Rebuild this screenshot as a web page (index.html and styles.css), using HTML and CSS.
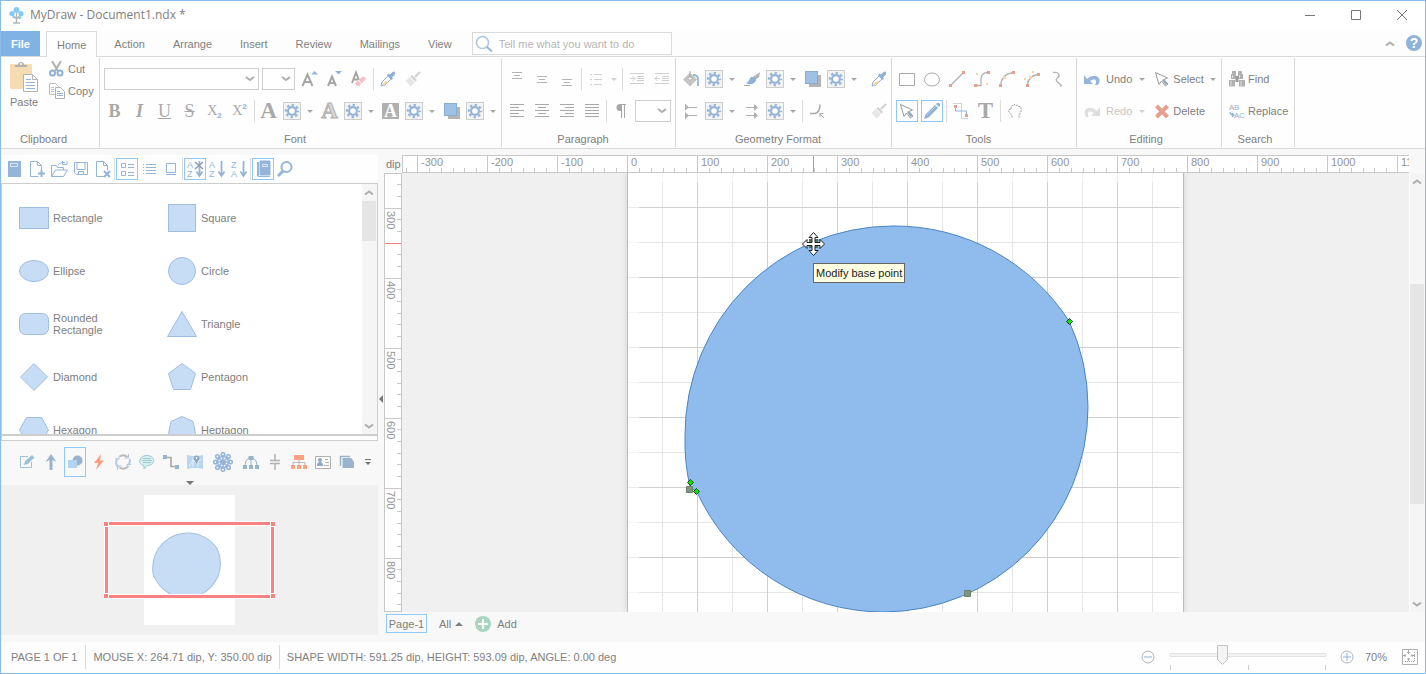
FILE: index.html
```html
<!DOCTYPE html>
<html lang="en">
  <head>
    <meta charset="UTF-8" />
    <title>MyDraw - Document1.ndx *</title>
    <link rel="stylesheet" href="styles.css">
  </head>
  <body>
    <!-- icons that are used more than once -->
    <svg class="sprite" width="0" height="0">
      <symbol id="gear" viewBox="0 0 18 18">
        <rect x=".5" y=".5" width="17" height="17" fill="#f3f3f3" stroke="#cdcdcd" />
        <circle cx="9" cy="9" r="6" fill="none" stroke="#94b5d9" stroke-width="2.4" stroke-dasharray="2.3 2.41" stroke-dashoffset="1.1" />
        <circle cx="9" cy="9" r="3.9" fill="#fff" stroke="#94b5d9" stroke-width="2.2" />
      </symbol>
      <symbol id="dropper" viewBox="0 0 16 16">
        <path d="M1 15l1-4 6-6 3 3-6 6z" fill="#fff" stroke="#8fb1d6" />
        <path d="M3 12l3-2 2 1-3 3-3 .5z" fill="#f3d6a6" />
        <path d="M7 4l1.500-1.500 1.500 1L12.500 1q2-1 2.500.5t-.5 2.500L12 6.500l1 1L11.500 9z" fill="#8fb1d6" />
      </symbol>
      <symbol id="brush" viewBox="0 0 16 16">
        <path d="M15 1l-5 5" stroke="#d5d5d5" stroke-width="2.400" />
        <path d="M7 4l5 5-1.500 1.500-5-5z" fill="#cfcfcf" />
        <path d="M5 6l5 5-4 4.500L.5 10z" fill="#e6e6e6" />
      </symbol>
      <symbol id="squares" viewBox="0 0 16 16">
        <rect x="4" y="4" width="12" height="12" fill="#b4b4b4" />
        <rect x=".5" y=".5" width="12" height="12" fill="#9fc1e4" stroke="#86add6" />
      </symbol>
      <symbol id="pointer" viewBox="0 0 16 16">
        <path d="M1.500 1.500l3.500 12 2.500-3.500 4 5 2.500-2-4-4.500 3.500-1.500z" fill="#fff" stroke="#9a9a9a" />
        <path d="M8 9l3.500 5 2-1.500L9.500 8z" fill="#8fa9c6" />
      </symbol>
      <symbol id="file" viewBox="0 0 18 18">
        <path d="M10.500 16.500h-8v-15h7l4 4v5M9.500 1.500v4h4" fill="none" stroke="#94b5d9" />
      </symbol>
      <symbol id="az" viewBox="0 0 18 18">
        <path d="M13.500 1v15M10.500 11.500l3 4.500 3-4.500" fill="none" stroke="#94b5d9" stroke-width="1.800" />
      </symbol>
      <symbol id="down" viewBox="0 0 10 6"><path d="M1 1.500l4 3 4-3" fill="none" stroke="#aeaeae" stroke-width="2" /></symbol>
      <symbol id="up" viewBox="0 0 10 6"><path d="M1 4.500l4-3 4 3" fill="none" stroke="#aeaeae" stroke-width="2" /></symbol>
    </svg>

    <header class="titlebar">
      <svg class="logo" width="16" height="17" viewBox="0 0 16 17">
        <path d="M7.500 6v10M4 16h7M7.500 12L4 8M7.500 12l4-4" stroke="#b5b5b5" stroke-width="1.300" fill="none" />
        <g fill="#85cbf3"><circle cx="7.500" cy="3" r="3" /><circle cx="3" cy="6.500" r="2.600" /><circle cx="12" cy="6.500" r="2.600" /><circle cx="4.500" cy="10" r="1.200" /><circle cx="11" cy="10.500" r="1.500" /></g>
      </svg>
      <h1>MyDraw - Document1.ndx *</h1>
      <button class="window-btn" aria-label="Minimize"><svg width="12" height="12"><path d="M1 6.500h10" stroke="#777" /></svg></button>
      <button class="window-btn" aria-label="Maximize"><svg width="12" height="12"><path d="M1.500 1.500h9v9h-9z" fill="none" stroke="#777" /></svg></button>
      <button class="window-btn" aria-label="Close"><svg width="12" height="12"><path d="M1 1l10 10M11 1L1 11" stroke="#777" /></svg></button>
    </header>

    <nav class="tabs">
      <button class="file-tab">File</button>
      <button class="tab active">Home</button>
      <button class="tab">Action</button>
      <button class="tab">Arrange</button>
      <button class="tab">Insert</button>
      <button class="tab">Review</button>
      <button class="tab">Mailings</button>
      <button class="tab">View</button>
      <label class="tell-me">
        <svg width="18" height="18" viewBox="0 0 18 18"><circle cx="7.500" cy="7.500" r="6" fill="none" stroke="#a9c6e6" stroke-width="1.600" /><path d="M12 12l5 4.500" stroke="#94b5d9" stroke-width="2" /></svg>
        <input type="text" aria-label="Tell me what you want to do" placeholder="Tell me what you want to do">
      </label>
      <button class="collapse" aria-label="Collapse ribbon"><svg width="10" height="6"><use href="#up" /></svg></button>
      <button class="help" aria-label="Help">?</button>
    </nav>

    <section class="ribbon">
      <div class="group clipboard">
        <div class="group-body">
          <button class="paste">
            <svg width="28" height="31" viewBox="0 0 28 31">
              <rect x="0" y="3" width="22" height="25" rx="1" fill="#f6dcb3" />
              <path d="M5 6V4h3q0-3 3-3t3 3h3v2z" fill="#b3b3b3" /><circle cx="11" cy="3" r="1" fill="#fff" />
              <path d="M13.500 13.500h9l5 5v12h-14z" fill="#fff" stroke="#b3b3b3" /><path d="M22.500 13.500v5h5" fill="none" stroke="#b3b3b3" />
              <path d="M16 18.500h5M16 21.500h9M16 24.500h9M16 27.500h9" stroke="#94b5d9" />
            </svg>
            Paste
          </button>
          <div class="stack">
            <button class="tool">
              <svg width="16" height="16" viewBox="0 0 16 16"><path d="M3 0l6 10M12 0L6 10" stroke="#b0b0b0" stroke-width="2" /><g fill="none" stroke="#8fb1d6" stroke-width="2"><circle cx="3.500" cy="12" r="2.500" /><circle cx="11" cy="12" r="2.500" /></g></svg>
              Cut
            </button>
            <button class="tool">
              <svg width="16" height="16" viewBox="0 0 16 16"><path d="M.5.500h6l3 3v8h-9z" fill="#fff" stroke="#bdbdbd" /><path d="M2 4.500h3M2 6.500h3M2 8.500h3" stroke="#a9c6e6" /><path d="M6.500 4.500h5l4 4v7h-9z" fill="#fff" stroke="#b0b0b0" /><path d="M8 8.500h3M8 10.500h6M8 12.500h6" stroke="#94b5d9" /></svg>
              Copy
            </button>
          </div>
        </div>
        <h2>Clipboard</h2>
      </div>

      <div class="group font">
        <div class="row">
          <select class="combo combo-font" aria-label="Font name"></select>
          <select class="combo combo-size" aria-label="Font size"></select>
          <button class="btn" aria-label="Grow font"><svg width="18" height="18"><path d="M2.500 16L7.500 4.500 12.500 16M4.500 12h6" fill="none" stroke="#a6a6a6" stroke-width="2" /><path d="M11 4.500l3.500-3.500L18 4.500z" fill="#94b5d9" /></svg></button>
          <button class="btn" aria-label="Shrink font"><svg width="18" height="18"><path d="M3 16L7 6.500 11 16M4.500 13h5" fill="none" stroke="#a6a6a6" stroke-width="2" /><path d="M10 1l3.500 3.500L17 1z" fill="#94b5d9" /></svg></button>
          <button class="btn" aria-label="Clear formatting"><svg width="18" height="18"><path d="M2 13L6 2.500 10 13M3.500 9.500h5" fill="none" stroke="#a6a6a6" stroke-width="2" /><path d="M5 13l7-6q3-1 4 2l-7 7H7z" fill="#f4c0c8" /><path d="M8 10l4 4" stroke="#fff" /></svg></button>
          <i class="sep"></i>
          <button class="btn" aria-label="Pick format"><svg width="16" height="16"><use href="#dropper" /></svg></button>
          <button class="btn" aria-label="Apply format"><svg width="16" height="16"><use href="#brush" /></svg></button>
        </div>
        <div class="row">
          <button class="btn serif"><b>B</b></button>
          <button class="btn serif"><i>I</i></button>
          <button class="btn serif"><u>U</u></button>
          <button class="btn serif"><s>S</s></button>
          <button class="btn script">X<sub>2</sub></button>
          <button class="btn script">X<sup>2</sup></button>
          <i class="sep"></i>
          <button class="btn serif big"><b>A</b></button>
          <button class="gear" aria-label="Fill settings"><svg width="18" height="18"><use href="#gear" /></svg></button>
          <button class="caret" aria-label="More"></button>
          <button class="btn serif big outline"><b>A</b></button>
          <button class="gear" aria-label="Stroke settings"><svg width="18" height="18"><use href="#gear" /></svg></button>
          <button class="caret" aria-label="More"></button>
          <button class="btn serif knockout"><b>A</b></button>
          <button class="gear" aria-label="Background settings"><svg width="18" height="18"><use href="#gear" /></svg></button>
          <button class="caret" aria-label="More"></button>
          <button class="btn" aria-label="Shadow"><svg width="16" height="16"><use href="#squares" /></svg></button>
          <button class="gear" aria-label="Shadow settings"><svg width="18" height="18"><use href="#gear" /></svg></button>
          <button class="caret" aria-label="More"></button>
        </div>
        <h2>Font</h2>
      </div>

      <div class="group paragraph">
        <div class="row">
          <button class="btn" aria-label="Align top"><svg width="16" height="16"><path d="M3 1.500h10M5 4.500h6M3 7.500h10" stroke="#b3b3b3" /></svg></button>
          <button class="btn" aria-label="Align middle"><svg width="16" height="16"><path d="M3 5.500h10M5 8.500h6M3 11.500h10" stroke="#b3b3b3" /></svg></button>
          <button class="btn" aria-label="Align bottom"><svg width="16" height="16"><path d="M3 8.500h10M5 11.500h6M3 14.500h10" stroke="#b3b3b3" /></svg></button>
          <i class="sep"></i>
          <button class="btn" aria-label="Bullets"><svg width="16" height="16"><path d="M2 3.500h2M6 3.500h8M2 8.500h2M6 8.500h8M2 13.500h2M6 13.500h8" stroke="#d2d2d2" /></svg></button>
          <button class="caret light" aria-label="More bullets"></button>
          <i class="sep"></i>
          <button class="btn" aria-label="Increase indent"><svg width="16" height="16"><path d="M1 2.500h14M8 5.500h7M8 7.500h7M8 9.500h7M1 12.500h14M1 7.500h5M3.500 5l2.500 2.500L3.500 10" fill="none" stroke="#cfcfcf" /></svg></button>
          <button class="btn" aria-label="Decrease indent"><svg width="16" height="16"><path d="M1 2.500h14M8 5.500h7M8 7.500h7M8 9.500h7M1 12.500h14M1 7.500h5M3.500 5L1 7.500 3.500 10" fill="none" stroke="#cfcfcf" /></svg></button>
        </div>
        <div class="row">
          <button class="btn" aria-label="Align left"><svg width="16" height="16"><path d="M1 1.500h14M1 4.500h9M1 7.500h14M1 10.500h9M1 13.500h14" stroke="#a8a8a8" /></svg></button>
          <button class="btn" aria-label="Align center"><svg width="16" height="16"><path d="M1 1.500h14M4 4.500h8M1 7.500h14M4 10.500h8M1 13.500h14" stroke="#a8a8a8" /></svg></button>
          <button class="btn" aria-label="Align right"><svg width="16" height="16"><path d="M1 1.500h14M6 4.500h9M1 7.500h14M6 10.500h9M1 13.500h14" stroke="#a8a8a8" /></svg></button>
          <button class="btn" aria-label="Justify"><svg width="16" height="16"><path d="M1 1.500h14M1 4.500h14M1 7.500h14M1 10.500h14M1 13.500h14" stroke="#a8a8a8" /></svg></button>
          <i class="sep"></i>
          <button class="btn" aria-label="Paragraph direction"><svg width="16" height="16"><path d="M8 1.500h5M8.500 1v14M11.500 1v14" stroke="#a8a8a8" /><path d="M9 1H7a3.500 3.500 0 0 0 0 7h2z" fill="#a8a8a8" /></svg></button>
          <select class="combo combo-line" aria-label="Line spacing"></select>
        </div>
        <h2>Paragraph</h2>
      </div>

      <div class="group geometry">
        <div class="row">
          <button class="btn" aria-label="Fill"><svg width="18" height="18"><path d="M8 2.500L15 9.500 8 16.500 1 9.500z" fill="#c4c4c4" /><path d="M8 1v7M6 8.500l2-3 2 3-2 2z" fill="#fff" stroke="#aaa" /><path d="M11 5q5 0 5 4v7" fill="none" stroke="#94b5d9" stroke-width="1.800" /></svg></button>
          <button class="gear" aria-label="Fill settings"><svg width="18" height="18"><use href="#gear" /></svg></button>
          <button class="caret" aria-label="More"></button>
          <button class="btn" aria-label="Stroke"><svg width="18" height="18"><path d="M17 2l-1 5-4 3-2-3z" fill="#b4b4b4" /><path d="M3 13q3-1 4-5 3-3 6 1 0 4-4 5-3 1-6-1z" fill="#8fb1d6" /><path d="M1 15.500h6" stroke="#aaa" /></svg></button>
          <button class="gear" aria-label="Stroke settings"><svg width="18" height="18"><use href="#gear" /></svg></button>
          <button class="caret" aria-label="More"></button>
          <button class="btn" aria-label="Shadow"><svg width="16" height="16"><use href="#squares" /></svg></button>
          <button class="gear" aria-label="Shadow settings"><svg width="18" height="18"><use href="#gear" /></svg></button>
          <button class="caret" aria-label="More"></button>
          <button class="btn last" aria-label="Pick format"><svg width="16" height="16"><use href="#dropper" /></svg></button>
        </div>
        <div class="row">
          <button class="btn" aria-label="Begin arrowhead"><svg width="16" height="18"><path d="M2 5.500h12M2 13.500h12" stroke="#b0b0b0" /><path d="M2 1.500l4 4-4 3zM2 10l4 3.500-4 4z" fill="#b0b0b0" /></svg></button>
          <button class="gear" aria-label="Begin arrowhead settings"><svg width="18" height="18"><use href="#gear" /></svg></button>
          <button class="caret" aria-label="More"></button>
          <button class="btn" aria-label="End arrowhead"><svg width="16" height="18"><path d="M2 5.500h10M2 13.500h10" stroke="#b0b0b0" /><path d="M10 2l4 3.500L10 9zM10 10l4 3.500-4 3.500z" fill="#b0b0b0" /></svg></button>
          <button class="gear" aria-label="End arrowhead settings"><svg width="18" height="18"><use href="#gear" /></svg></button>
          <button class="caret" aria-label="More"></button>
          <i class="sep"></i>
          <button class="btn" aria-label="Corner rounding"><svg width="16" height="16"><path d="M1 10.500h5q5-1 5-9" fill="none" stroke="#aaa" stroke-width="1.600" /><path d="M15 15l-4-4M11 14v-3.500h3.500" fill="none" stroke="#aaa" /></svg></button>
          <button class="btn last" aria-label="Apply format"><svg width="16" height="16"><use href="#brush" /></svg></button>
        </div>
        <h2>Geometry Format</h2>
      </div>

      <div class="group tools">
        <div class="row">
          <button class="btn" aria-label="Rectangle tool"><svg width="16" height="16"><path d="M.5 2.500h15v12H.5z" fill="none" stroke="#aaa" /></svg></button>
          <button class="btn" aria-label="Ellipse tool"><svg width="16" height="16"><ellipse cx="8" cy="8.500" rx="7.500" ry="6.500" fill="none" stroke="#aaa" /></svg></button>
          <button class="btn" aria-label="Line tool"><svg width="16" height="16"><path d="M2 14L14 2" stroke="#b0b0b0" stroke-width="1.300" /><path d="M0 13h3v3H0zM13 0h3v3h-3z" fill="#e6a090" /></svg></button>
          <button class="btn" aria-label="Bezier tool"><svg width="16" height="16"><path d="M1 14.500h6V8q0-6.500 7-6.500" fill="none" stroke="#b0b0b0" stroke-width="1.300" /><path d="M0 13h3v3H0zM13 0h3v3h-3z" fill="#e6a090" /><path d="M2 2h2v2H2zM12 12h2v2h-2z" fill="#f3d6a6" /></svg></button>
          <button class="btn" aria-label="Arc tool"><svg width="16" height="16"><path d="M1.500 14Q3 3 14 1.500" fill="none" stroke="#b0b0b0" stroke-width="1.300" /><path d="M0 13h3v3H0zM13 0h3v3h-3z" fill="#e6a090" /><path d="M4 5h3v3H4z" fill="#f3d6a6" /></svg></button>
          <button class="btn" aria-label="Curve tool"><svg width="16" height="16"><path d="M3.500 14Q4 5 14 3.500" fill="none" stroke="#b0b0b0" stroke-width="1.300" /><path d="M2 13h3v3H2zM13 2h3v3h-3z" fill="#e6a090" /><path d="M5 5h3v3H5zM8 0h2v2H8zM0 7h2v2H0z" fill="#f3d6a6" /></svg></button>
          <button class="btn" aria-label="Freehand tool"><svg width="16" height="16"><path d="M4 1.500c6-1 8 3 4 6s8 7 3 7.500" fill="none" stroke="#b5b5b5" stroke-width="1.300" /></svg></button>
        </div>
        <div class="row">
          <button class="btn on" aria-label="Pointer tool"><svg width="16" height="16"><use href="#pointer" /></svg></button>
          <button class="btn on" aria-label="Edit points tool"><svg width="16" height="16"><path d="M0 16l1.500-4.500L11 2l3 3-9.500 9.500z" fill="#8fb1d6" /><path d="M12 1l1-1h2l1 1v2l-1 1z" fill="#8fb1d6" /><path d="M2.500 12.500l9-9" stroke="#b7cfe8" /></svg></button>
          <i class="sep"></i>
          <button class="btn" aria-label="Connector tool"><svg width="16" height="16"><path d="M.5.500h8v15h7" fill="none" stroke="#aaa" stroke-dasharray="1 1" /><path d="M2.500 4v4h11v4" fill="none" stroke="#8fb1d6" /><path d="M1 2h3v3H1zM12 11h3v3h-3z" fill="#e6a090" /></svg></button>
          <button class="btn serif big"><b>T</b></button>
          <i class="sep"></i>
          <button class="btn" aria-label="Pan tool"><svg width="16" height="16"><path d="M5 14.500v-2L2 9 1.500 7l1.500-1 1 .5V3.500L5.500 2.500l1 .5 1-1.500 1.500 1 1.500-.5 1 1.500L13 3.500l1 1.500v4l-2 3v2.500" fill="none" stroke="#999" stroke-dasharray="2 1" /></svg></button>
        </div>
        <h2>Tools</h2>
      </div>

      <div class="group editing">
        <div class="row">
          <button class="tool wide"><svg width="16" height="16"><path d="M0 4v9h9L6 10q5-3.500 6 0 .5 2-1 4h3q3-5 0-8-5-3.500-11 2z" fill="#94b5d9" /></svg>Undo</button>
          <button class="caret gap" aria-label="More undo"></button>
          <button class="tool"><svg width="16" height="16"><use href="#pointer" /></svg>Select</button>
          <button class="caret after" aria-label="More select"></button>
        </div>
        <div class="row">
          <button class="tool wide" disabled><svg width="16" height="16"><path d="M16 4v9H7l3-3q-5-3.500-6 0-.5 2 1 4H2q-3-5 0-8 5-3.500 11 2z" fill="#dedede" /></svg>Redo</button>
          <button class="caret gap light" aria-label="More redo"></button>
          <button class="tool"><svg width="16" height="16"><path d="M2.500 3l11 11M13.500 3l-11 11" stroke="#e6a090" stroke-width="4" /></svg>Delete</button>
        </div>
        <h2>Editing</h2>
      </div>

      <div class="group search">
        <div class="row">
          <button class="tool"><svg width="16" height="16"><path d="M3 0h4v3H3zM9 0h4v3H9zM2 3h5v5H2zM9 3h5v5H9zM0 9h6v6.500H0zM10 9h6v6.500h-6z" fill="#b0b0b0" /><path d="M6.500 5h3v6h-3z" fill="#9a9a9a" /><path d="M2 10v5M12 10v5M3.500 4v3M10.500 4v3" stroke="#dcdcdc" /></svg>Find</button>
        </div>
        <div class="row">
          <button class="tool"><svg width="16" height="18" class="ab small"><text x="0" y="8" fill="#aaa">A</text><text x="5" y="8">B</text><text x="5" y="16" fill="#aaa">A</text><text x="10" y="16">C</text><path d="M1 10q0 3 4 3M3 11l2 2-2 2" fill="none" stroke="#8fb1d6" stroke-width="1.300" /></svg>Replace</button>
        </div>
        <h2>Search</h2>
      </div>
    </section>

    <main>
      <aside>
        <div class="library-bar">
          <button aria-label="Library"><svg width="18" height="18"><path d="M2 1h13v16H2z" fill="#94b5d9" /><path d="M4.500 3.500h7v3h-7z" fill="#94b5d9" stroke="#dbe7f4" /></svg></button>
          <button aria-label="New library"><svg width="18" height="18"><use href="#file" /><path d="M13.500 10v7M10 13.500h7" stroke="#94b5d9" stroke-width="2" /></svg></button>
          <button aria-label="Open library"><svg width="18" height="18"><path d="M1.500 16V5.500h5l1 2h6V10M1.500 16.500l4-6.500h12l-4 6.500zM8 5q2-3 7-2.500M12.500 1v3.500H17V1" fill="none" stroke="#94b5d9" /></svg></button>
          <button aria-label="Save library"><svg width="18" height="18"><path d="M2.500 2.500h13v12h-11l-2-2zM5 2.500v7h8v-7M6.500 14.500v-3h5v3" fill="none" stroke="#94b5d9" /></svg></button>
          <button aria-label="Close library"><svg width="18" height="18"><use href="#file" /><path d="M10 11l6 6M16 11l-6 6" stroke="#94b5d9" stroke-width="2" /></svg></button>
          <i class="sep"></i>
          <button class="on" aria-label="Icons and names"><svg width="18" height="18"><path d="M3.500 3.500h4v4h-4zM3.500 11.500h4v4h-4zM10 4.500h6M10 7.500h6M10 12.500h6M10 15.500h6" fill="none" stroke="#94b5d9" /></svg></button>
          <button aria-label="Names"><svg width="18" height="18"><path d="M3 4.500h1M6 4.500h10M3 7.500h1M6 7.500h10M3 10.500h1M6 10.500h10M3 13.500h1M6 13.500h10" stroke="#94b5d9" /></svg></button>
          <button aria-label="Icons"><svg width="18" height="18"><path d="M4.500 3.500h9v9h-9zM4 14.500h10" fill="none" stroke="#94b5d9" /></svg></button>
          <i class="sep"></i>
          <button class="on" aria-label="Unsorted"><svg width="18" height="18" class="ab"><use href="#az" /><text x="1" y="8">A</text><text x="1" y="17">Z</text><path d="M9 2l8 7M17 2L9 9" stroke="#8b9bb0" stroke-width="1.500" /></svg></button>
          <button aria-label="Sort ascending"><svg width="18" height="18" class="ab"><use href="#az" /><text x="1" y="8">A</text><text x="1" y="17">Z</text></svg></button>
          <button aria-label="Sort descending"><svg width="18" height="18" class="ab"><use href="#az" /><text x="1" y="8">Z</text><text x="1" y="17">A</text></svg></button>
          <i class="sep"></i>
          <button class="on" aria-label="Show book"><svg width="18" height="18"><path d="M3.500 2v14h1V2M6 1h10v14H6zM4 16.500h12" fill="#94b5d9" stroke="#94b5d9" /><path d="M8.500 4.500h5v2h-5z" fill="none" stroke="#dbe7f4" /></svg></button>
          <button aria-label="Find shape"><svg width="18" height="18"><circle cx="10.500" cy="7" r="5" fill="none" stroke="#94b5d9" stroke-width="2" /><path d="M7 11l-5 5" stroke="#94b5d9" stroke-width="3" /></svg></button>
        </div>

        <div class="library">
          <ul class="shapes">
            <li><svg viewBox="0 0 30 30"><rect x=".5" y="4.500" width="29" height="21" /></svg>Rectangle</li>
            <li><svg viewBox="0 0 30 30"><rect x="1.500" y="1.500" width="27" height="27" /></svg>Square</li>
            <li><svg viewBox="0 0 30 30"><ellipse cx="15" cy="15" rx="14.500" ry="10.500" /></svg>Ellipse</li>
            <li><svg viewBox="0 0 30 30"><circle cx="15" cy="15" r="13.500" /></svg>Circle</li>
            <li><svg viewBox="0 0 30 30"><rect x=".5" y="4.500" width="29" height="21" rx="6" /></svg>Rounded<br>Rectangle</li>
            <li><svg viewBox="0 0 30 30"><path d="M15 2.500L29.500 27.500H.5z" /></svg>Triangle</li>
            <li><svg viewBox="0 0 30 30"><path d="M15 1.500L28.500 15 15 28.500 1.500 15z" /></svg>Diamond</li>
            <li><svg viewBox="0 0 30 30"><path d="M15 1.500l13.500 10-5 16h-17l-5-16z" /></svg>Pentagon</li>
            <li><svg viewBox="0 0 30 30"><path d="M.5 15l7-12.500h15l7 12.500-7 12.500h-15z" /></svg>Hexagon</li>
            <li><svg viewBox="0 0 30 30"><path d="M15 1.500l11 5 2.500 12L21 28.500H9L1.500 18.500 4 6.500z" /></svg>Heptagon</li>
          </ul>
          <div class="scrollbar">
            <button aria-label="Scroll up"><svg width="10" height="6"><use href="#up" /></svg></button>
            <div class="thumb"></div>
            <button aria-label="Scroll down"><svg width="10" height="6"><use href="#down" /></svg></button>
          </div>
        </div>
        <div class="library-split"></div>

        <div class="category-bar">
          <button aria-label="Annotations"><svg width="16" height="16"><path d="M9 2.500H1.500v11h11V8" fill="none" stroke="#9dc3d9" /><path d="M5 11l1-4 7-6 2.500 2.500L9 10z" fill="#9dc3d9" /></svg></button>
          <button aria-label="Arrows"><svg width="16" height="16"><path d="M8 0l5.500 8-4-2V16h-3V6l-4 2z" fill="#9ab3cd" /></svg></button>
          <button class="on" aria-label="Basic shapes"><svg width="16" height="16"><circle cx="10.500" cy="6.500" r="5" fill="#9ab3cd" /><path d="M1 6h9v8H1z" fill="#b3d3f3" /></svg></button>
          <button aria-label="Electrical"><svg width="16" height="16"><path d="M10 0L3 9h4l-2 7 8-9.500H9z" fill="#fd9f80" /></svg></button>
          <button aria-label="Cycles"><svg width="16" height="16" fill="none" stroke-width="2"><path d="M4.500 2.500a6.500 6.500 0 0 1 8 .5M13.500 12a6.500 6.500 0 0 1-9 1.500" stroke="#b9b9b9" /><path d="M14.500 5a6.500 6.500 0 0 1-1 6M3.500 13.500a6.500 6.500 0 0 1-1-9" stroke="#aecbe5" /><path d="M13.500 0v4h-4M16 10.500h-4v3M2.500 16v-4h4M0 5h4V2" stroke="#b4c6d8" stroke-width="1" /></svg></button>
          <button aria-label="Callouts"><svg width="16" height="16"><path d="M8 1.500c9 0 9 10 0 10L5 15v-3.500c-7-1-5-10 3-10z" fill="#d9f0f0" stroke="#9dc9d3" /><path d="M4 4.500h8M3 6.500h10M4 8.500h8" stroke="#9dc9d3" /></svg></button>
          <button aria-label="Connectors"><svg width="16" height="16"><path d="M2 3.500h6v9h6" fill="none" stroke="#a6a6a6" stroke-width="1.600" /><path d="M0 1h4v4H0zM12 11h4v4h-4z" fill="#9ab3cd" /></svg></button>
          <button aria-label="Maps"><svg width="16" height="16"><path d="M0 1l5 1 6 0 5-1v14l-5-1H5l-5 1z" fill="#b9d5ef" /><path d="M2 12l4-6 4 3 4-4M6 3v10M11 9v4" stroke="#e9f2fa" fill="none" /><path d="M9.500 10L6.500 4.500a3 3 0 0 1 6 0z" fill="#8ba7c4" /><circle cx="9.500" cy="4" r="1" fill="#fff" /></svg></button>
          <button class="large" aria-label="Fractals">
            <svg width="20" height="20" fill="none" stroke="#94b5d9" stroke-width="1.500">
              <path d="M10 3v14M3 10h14M5 5l10 10M15 5L5 15" /><circle cx="10" cy="10" r="2" /><circle cx="10" cy="10" r="5.500" />
              <circle cx="10" cy="2.500" r="1.800" /><circle cx="15.500" cy="4.500" r="1.800" /><circle cx="17.500" cy="10" r="1.800" /><circle cx="15.500" cy="15.500" r="1.800" />
              <circle cx="10" cy="17.500" r="1.800" /><circle cx="4.500" cy="15.500" r="1.800" /><circle cx="2.500" cy="10" r="1.800" /><circle cx="4.500" cy="4.500" r="1.800" />
            </svg>
          </button>
          <button aria-label="Network"><svg width="16" height="16"><path d="M2 11q0-5 4-7h4q4 2 4 7M8 4v8" fill="none" stroke="#9ab3cd" /><path d="M5.500 2h5v4h-5zM0 11h4v4H0zM6 11h4v4H6zM12 11h4v4h-4z" fill="#9ab3cd" /></svg></button>
          <button aria-label="Circuit"><svg width="16" height="16"><path d="M8 0v6M3 6.500h10M3 9.500h10M8 10v6" stroke="#b0b0b0" stroke-width="1.500" /></svg></button>
          <button aria-label="Org chart"><svg width="16" height="16"><path d="M8 5v6M2 11V8.500h12V11" fill="none" stroke="#b9b9b9" /><path d="M3 1h10v5H3zM0 11h4v4H0zM6 11h4v4H6zM12 11h4v4h-4z" fill="#fd9f80" /></svg></button>
          <button aria-label="Cards"><svg width="16" height="16"><path d="M.5 2.500h15v12H.5z" fill="#fff" stroke="#b0b0b0" /><circle cx="5" cy="6" r="2" fill="#8ba7c4" /><path d="M2 12q0-4 3-4t3 4z" fill="#8ba7c4" /><path d="M10 5.500h3M10 8.500h4M9 11.500h5" stroke="#b0b0b0" /></svg></button>
          <button aria-label="Pages"><svg width="16" height="16"><path d="M1.500 12V2.500H11" fill="none" stroke="#9ab3cd" stroke-width="1.500" /><path d="M3.500 4H12l3 3.500V14H3.500z" fill="#9ab3cd" /></svg></button>
          <button class="overflow" aria-label="More categories"><svg width="8" height="8"><path d="M1 1.500h6" stroke="#777" /><path d="M1 4h6L4 7z" fill="#777" /></svg></button>
        </div>
        <button class="expand" aria-label="Expand categories"><svg width="8" height="4"><path d="M0 0h8L4 4z" fill="#777" /></svg></button>

        <div class="overview">
          <svg width="180" height="130">
            <rect x="44" width="91" height="130" fill="#fff" />
            <path transform="translate(43 29) scale(.168)" d="M63 314A208 208 0 0 1 58 262A208 209 0 0 1 266 53A208 209 0 0 1 442 148A205 205 0 0 1 461 234A205 205 0 0 1 256 439A205 205 0 0 1 70 319z" fill="#c7ddf5" stroke="#a3bfdf" stroke-width="6" />
            <rect x="6.500" y="28.500" width="166" height="73" fill="none" stroke="#fff" stroke-width="5" />
            <rect x="6.500" y="28.500" width="166" height="73" fill="none" stroke="#ff8080" stroke-width="3" />
            <path d="M3.500 26.500h5v5h-5zM170.500 26.500h5v5h-5zM3.500 98.500h5v5h-5zM170.500 98.500h5v5h-5z" fill="#ff8080" stroke="#fff" />
          </svg>
        </div>
      </aside>

      <button class="splitter" aria-label="Collapse panel"><svg width="4" height="8"><path d="M4 0v8L0 4z" fill="#777" /></svg></button>

      <section class="editor">
        <div class="corner">dip</div>
        <div class="ruler-h">
          <svg width="1400" height="16">
            <defs>
              <pattern id="ticks-h" x="1" width="70" height="16" patternUnits="userSpaceOnUse">
                <path d="M.5 0v16M12.500 12v4M24.500 12v4M36.500 12v4M47.500 12v4M59.500 12v4" stroke="#c8c8c8" />
              </pattern>
            </defs>
            <rect width="1400" height="16" fill="url(#ticks-h)" />
            <path d="M607.500 0v16" stroke="#f08080" />
            <text x="215" y="10">-300</text>
            <text x="285" y="10">-200</text>
            <text x="355" y="10">-100</text>
            <text x="425" y="10">0</text>
            <text x="495" y="10">100</text>
            <text x="565" y="10">200</text>
            <text x="635" y="10">300</text>
            <text x="705" y="10">400</text>
            <text x="775" y="10">500</text>
            <text x="845" y="10">600</text>
            <text x="915" y="10">700</text>
            <text x="985" y="10">800</text>
            <text x="1055" y="10">900</text>
            <text x="1125" y="10">1000</text>
            <text x="1195" y="10">1100</text>
          </svg>
        </div>
        <div class="ruler-v">
          <svg width="16" height="1000">
            <defs>
              <pattern id="ticks-v" y="34" width="16" height="70" patternUnits="userSpaceOnUse">
                <path d="M0 .5h16M12 11.500h4M12 23.500h4M12 35.500h4M12 46.500h4M12 58.500h4" stroke="#c8c8c8" />
              </pattern>
            </defs>
            <rect width="16" height="1000" fill="url(#ticks-v)" />
            <path d="M0 69.500h16" stroke="#f08080" />
            <text transform="translate(2 37) rotate(90)">300</text>
            <text transform="translate(2 107) rotate(90)">400</text>
            <text transform="translate(2 177) rotate(90)">500</text>
            <text transform="translate(2 247) rotate(90)">600</text>
            <text transform="translate(2 317) rotate(90)">700</text>
            <text transform="translate(2 387) rotate(90)">800</text>
          </svg>
        </div>

        <div class="canvas">
          <div class="page">
            <svg width="557" height="100%">
              <defs>
                <pattern id="grid" y="34" width="70" height="70" patternUnits="userSpaceOnUse">
                  <path d="M35.500 0v70M0 35.500h70" stroke="#e6e6e6" />
                  <path d="M.5 0v70M0 .5h70" stroke="#d0d0d0" />
                </pattern>
              </defs>
              <rect width="557" height="100%" fill="url(#grid)" />
              <!-- page margins fade the grid -->
              <path d="M1 0h11v1000H1zM552 0h4v1000h-4zM12 0h540v9H12z" fill="#fff" fill-opacity=".6" />
              <path d="M.5 0v1000M556.500 0v1000" stroke="#bdbdbd" />
              <path d="M63 314A208 208 0 0 1 58 262A208 209 0 0 1 266 53A208 209 0 0 1 442 148A205 205 0 0 1 461 234A205 205 0 0 1 256 439A205 205 0 0 1 70 319z" fill="#8fbced" stroke="#4c85c2" />
              <g fill="#7c987c" stroke="#6f806f"><path d="M59.500 313.500h6v6h-6zM337.500 417.500h6v6h-6z" /></g>
              <g fill="#00e600" stroke="#1d3a1d"><path d="M63.500 306.500l3 3-3 3-3-3zM69.500 315.500l3 3-3 3-3-3zM442.500 145.500l3 3-3 3-3-3z" /></g>
              <rect x="182" y="66" width="9" height="9" fill="#4d7a4d" />
              <path d="M186.500 59.500l4.500 5h-3v5h5v-3l4.500 4.500-4.500 4.500v-3h-5v5h3l-4.500 5-4.500-5h3v-5h-5v3l-4.500-4.500 4.500-4.500v3h5v-5h-3z" fill="#fff" stroke="#222" />
            </svg>
            <div class="tooltip" role="tooltip">Modify base point</div>
          </div>
        </div>

        <div class="scrollbar main-scroll">
          <button aria-label="Scroll up"><svg width="10" height="6"><use href="#up" /></svg></button>
          <div class="thumb"></div>
          <button aria-label="Scroll down"><svg width="10" height="6"><use href="#down" /></svg></button>
        </div>

        <div class="page-bar">
          <button class="page-tab">Page-1</button>
          <button class="page-all">All <svg width="8" height="4"><path d="M0 4h8L4 0z" fill="#808080" /></svg></button>
          <button class="page-add"><svg width="16" height="16"><circle cx="8" cy="8" r="8" fill="#a8d5bf" /><path d="M8 3v10M3 8h10" stroke="#fff" stroke-width="2" /></svg>Add</button>
        </div>
      </section>
    </main>

    <footer>
      <span>PAGE 1 OF 1</span>
      <span>MOUSE X: 264.71 dip, Y: 350.00 dip</span>
      <span>SHAPE WIDTH: 591.25 dip, HEIGHT: 593.09 dip, ANGLE: 0.00 deg</span>
      <div class="zoom">
        <button aria-label="Zoom out"><svg width="14" height="14"><circle cx="7" cy="7" r="6" fill="none" stroke="#b5b5b5" /><path d="M3 7h8" stroke="#8fb1e0" /></svg></button>
        <div class="slider">
          <input type="range" min="0" max="100" value="32" aria-label="Zoom">
          <div class="marks"><i></i><i></i><i></i></div>
        </div>
        <button aria-label="Zoom in"><svg width="14" height="14"><circle cx="7" cy="7" r="6" fill="none" stroke="#b5b5b5" /><path d="M3 7h8M7 3v8" stroke="#8fb1e0" /></svg></button>
        <output>70%</output>
        <button aria-label="Fit to window"><svg width="16" height="16"><path d="M.5.500h15v15H.5z" fill="none" stroke="#b0b0b0" /><path d="M3 12.500h9.500V3" fill="none" stroke="#a0a0a0" stroke-dasharray="1 1" /><path d="M6.500 1v4M6.500 9v3M1 6.500h3M9 6.500h4M5 3.500h3M5 10h3M3 5v3M10 5v3" stroke="#a8a8a8" /></svg></button>
      </div>
    </footer>
  </body>
</html>
```

FILE: styles.css
```css
* {
  box-sizing: border-box;
}

body {
  display: flex;
  flex-direction: column;
  height: 100vh;
  margin: 0;
  border: 1px solid #8bbce8;
  background-color: #f8f8f8;
  color: #808080;
  font: 11px/12px "Liberation Sans", Arial, sans-serif;
  overflow: hidden;
}

button {
  display: flex;
  align-items: center;
  justify-content: center;
  margin: 0;
  padding: 0;
  border: 0;
  background: none;
  color: inherit;
  font: inherit;
}

svg {
  display: block;
  flex: none;
}

h1,
h2 {
  margin: 0;
  font-weight: normal;
}

.sprite {
  position: absolute;
}

.sep {
  flex: none;
  width: 1px;
  height: 22px;
  margin: 0 1px 0 2px;
  background-color: #dcdcdc;
}

.ab {
  font-size: 9px;
  fill: #94b5d9;
}

.ab.small {
  font-size: 8px;
}

/* title bar */
.titlebar {
  display: flex;
  flex: none;
  align-items: center;
  height: 30px;
  padding: 0 0 2px 8px;
  background-color: #fff;
}

.titlebar h1 {
  flex: 1;
  padding-left: 5px;
  font: 12px/16px "Open Sans", sans-serif;
}

.window-btn {
  width: 46px;
  height: 28px;
}

/* ribbon tabs */
.tabs {
  display: flex;
  flex: none;
  height: 26px;
  background-color: #fdfdfd;
  border-bottom: 1px solid #dadada;
}

.file-tab {
  width: 39px;
  margin-right: 6px;
  background-color: #80b2e6;
  color: #fff;
  font-weight: bold;
}

.tab {
  padding: 0 14px;
}

.tab.active {
  height: 26px;
  margin-right: 3px;
  padding: 0 10px;
  border: 1px solid #dadada;
  border-bottom: 0;
  background-color: #fefefe;
}

.tell-me {
  display: flex;
  align-items: center;
  width: 200px;
  height: 23px;
  margin: 1px auto 0 6px;
  padding-left: 2px;
  border: 1px solid #dadada;
  background-color: #fff;
}

.tell-me input {
  width: 160px;
  margin-left: 6px;
  padding: 0;
  border: 0;
  outline: 0;
  background: none;
  font: inherit;
}

.tell-me input::placeholder {
  color: #b5b5b5;
}

.collapse {
  width: 24px;
}

.help {
  width: 16px;
  height: 16px;
  margin: 4px 3px 0 4px;
  border-radius: 8px;
  background-color: #8fb3da;
  color: #fff;
  font-size: 14px;
  font-weight: bold;
}

/* ribbon */
.ribbon {
  display: flex;
  flex: none;
  height: 92px;
  padding-top: 1px;
  background-color: #fefefe;
  border-bottom: 1px solid #dadada;
}

.group {
  display: flex;
  flex: none;
  flex-direction: column;
  height: 89px;
  padding-top: 5px;
  border-right: 1px solid #dadada;
}

.group h2 {
  padding: 6px 13px 0 0;
  font-size: 11px;
  text-align: center;
}

.clipboard { width: 99px; }
.font { width: 402px; padding-left: 2px; }
.paragraph { width: 174px; padding-left: 2px; }
.geometry { width: 216px; padding-left: 2px; }
.tools { width: 185px; padding-left: 2px; }
.editing { width: 145px; padding-left: 7px; }
.search { width: 73px; padding-left: 7px; }

.row,
.group-body {
  display: flex;
  align-items: center;
  height: 32px;
}

.group-body {
  align-items: flex-start;
  height: 64px;
}

.paste {
  flex-direction: column;
  gap: 4px;
  width: 46px;
  margin-top: -2px;
}

.stack {
  margin-top: -5px;
  padding-left: 2px;
}

.tool {
  justify-content: flex-start;
  gap: 3px;
  height: 22px;
}

.tool:disabled {
  color: #c6c6c6;
}

.tool.wide {
  gap: 6px;
}

.btn {
  flex: none;
  width: 25px;
  height: 22px;
}

.btn.on {
  width: 22px;
  margin: 0 1px 0 2px;
  border: 1px solid #90c8f6;
}

.btn.last {
  margin-left: auto;
}

.gear {
  flex: none;
  width: 22px;
}

.caret {
  flex: none;
  width: 14px;
  height: 22px;
}

.paragraph .caret {
  width: 12px;
}

.caret::after {
  content: "";
  border: 3px solid transparent;
  border-top-color: #a8a8a8;
  border-bottom: 0;
}

.caret.light::after {
  border-top-color: #d0d0d0;
}

.caret.gap {
  margin: 0 5px 0 3px;
}

.caret.after {
  margin-left: 2px;
}

.serif {
  color: #a8a8a8;
  font: 18px/22px "Liberation Serif", serif;
}

.serif i {
  font-weight: bold;
}

.serif.big {
  font-size: 23px;
}

.outline {
  color: #d6d6d6;
  -webkit-text-stroke: 1px #b0b0b0;
}

.knockout {
  width: 17px;
  height: 16px;
  margin: 0 4px;
  background-color: #b0b0b0;
  color: #fff;
}

.script {
  color: #a8a8a8;
  font: 14px/22px "Liberation Serif", serif;
}

.script sub,
.script sup {
  color: #8fb1d6;
  font: bold 8px/8px "Liberation Sans", sans-serif;
}

.script sub {
  padding-top: 10px;
}

.script sup {
  padding-bottom: 8px;
}

.combo {
  height: 22px;
  margin: 0;
  border: 1px solid #cfcfcf;
  border-radius: 0;
  appearance: none;
  background: #fff url('data:image/svg+xml,<svg xmlns="http://www.w3.org/2000/svg" width="10" height="6"><path d="M1 1l4 3 4-3" fill="none" stroke="%23aeaeae" stroke-width="2"/></svg>') no-repeat right 3px center;
}

.combo-font {
  width: 155px;
  margin: 0 3px 0 2px;
}

.combo-size {
  width: 33px;
  margin-right: 1px;
}

.combo-line {
  width: 36px;
  margin-left: 2px;
}

/* work area */
main {
  display: flex;
  flex: 1;
  min-height: 0;
  padding-top: 6px;
}

aside {
  display: flex;
  flex: none;
  flex-direction: column;
  width: 377px;
  padding-bottom: 7px;
}

.library-bar {
  display: flex;
  flex: none;
  align-items: center;
  height: 28px;
  padding-left: 3px;
  border-radius: 0 3px 0 0;
  background-color: #fefefe;
}

.library-bar button {
  width: 22px;
  height: 22px;
}

.library-bar .sep {
  margin: 0 1px 0 0;
}

.library-bar .on {
  border: 1px solid #90c8f6;
}

.library {
  display: flex;
  flex: 1;
  min-height: 0;
  border: 1px solid #cdcdcd;
  border-bottom-width: 2px;
  background-color: #fff;
}

.shapes {
  display: grid;
  flex: 1;
  grid-template-columns: 148px 148px;
  grid-auto-rows: 53px;
  margin: 0;
  padding: 7px 0 0 17px;
  list-style: none;
  overflow: hidden;
}

.shapes li {
  display: flex;
  align-items: center;
  gap: 4px;
}

.shapes svg {
  width: 30px;
  height: 30px;
  fill: #c7ddf5;
  stroke: #a0bedf;
}

.scrollbar {
  display: flex;
  flex-direction: column;
  width: 15px;
  padding-right: 1px;
  background-color: #f5f5f5;
}

.scrollbar button {
  flex: none;
  height: 17px;
}

.scrollbar button:last-child {
  margin-top: auto;
}

.thumb {
  height: 40px;
  background-color: #e5e5e5;
}

.library-split {
  flex: none;
  height: 5px;
  border: 1px solid #cdcdcd;
  border-top: 0;
  background-color: #fff;
}

.category-bar {
  display: flex;
  flex: none;
  align-items: center;
  height: 36px;
  margin-top: 3px;
  padding-left: 14px;
}

.category-bar button {
  width: 24px;
  height: 30px;
}

.category-bar .on {
  width: 22px;
  margin: 0 1px;
  border: 1px solid #90c8f6;
}

.category-bar .large {
  width: 32px;
}

.category-bar .overflow {
  width: 18px;
}

.category-bar .expand,
.expand {
  flex: none;
  height: 5px;
}

.overview {
  display: flex;
  flex: none;
  align-items: center;
  justify-content: center;
  height: 150px;
  background-color: #f0f0f0;
}

.splitter {
  flex: none;
  width: 6px;
}

/* drawing area */
.editor {
  display: grid;
  flex: 1;
  grid-template-columns: 18px minmax(0, 1fr) 16px;
  grid-template-rows: 18px minmax(0, 1fr) 30px;
}

.corner {
  padding: 3px 0 0 2px;
}

.ruler-h,
.ruler-v {
  border: 1px solid #c8c8c8;
  background-color: #fff;
  overflow: hidden;
}

.ruler-h {
  display: flex;
  justify-content: center;
  border-right: 0;
}

.ruler-h text,
.ruler-v text {
  fill: #949494;
}

.ruler-v {
  grid-area: 2 / 1;
}

.canvas {
  display: flex;
  grid-area: 2 / 2;
  justify-content: center;
  padding-left: 1px;
  background-color: #f0f0f0;
  overflow: hidden;
}

.page {
  position: relative;
  flex: none;
  margin-right: 1px;
  background-color: #fff;
  box-shadow: 0 0 6px #d0d0d0;
}

.tooltip {
  position: absolute;
  top: 90px;
  left: 186px;
  padding: 3px 2px;
  border: 1px solid #666;
  background-color: #ffffe1;
  color: #222;
  white-space: nowrap;
}

.main-scroll {
  grid-area: 2 / 3;
  width: auto;
  border-left: 1px solid #fff;
}

.main-scroll .thumb {
  height: 50%;
  margin-top: 94px;
}

.page-bar {
  display: flex;
  grid-area: 3 / 1 / 4 / 4;
  align-items: flex-start;
  padding: 2px 0 0 2px;
}

.page-bar button {
  height: 19px;
}

.page-bar .page-tab {
  width: 41px;
  border: 1px solid #90c8f6;
}

.page-all {
  gap: 4px;
  margin: 0 12px;
}

.page-add {
  gap: 6px;
}

/* status bar */
footer {
  display: flex;
  flex: none;
  align-items: center;
  height: 31px;
  padding: 0 7px 2px 2px;
  background-color: #fefefe;
}

footer span {
  padding: 6px 8px;
}

footer span + span {
  padding: 6px 7px;
  border-left: 1px solid #dadada;
}

.zoom {
  display: flex;
  align-items: center;
  margin-left: auto;
}

.slider {
  width: 156px;
  height: 24px;
  margin: 0 14px 0 15px;
}

.slider input {
  display: block;
  width: 100%;
  height: 20px;
  margin: 0;
  appearance: none;
  background: none;
}

.slider input::-webkit-slider-runnable-track {
  height: 4px;
  border: 1px solid #e2e2e2;
  background-color: #f3f3f3;
}

.slider input::-webkit-slider-thumb {
  width: 11px;
  height: 20px;
  margin-top: -9px;
  appearance: none;
  background: url('data:image/svg+xml,<svg xmlns="http://www.w3.org/2000/svg" width="11" height="20"><path d="M.5.500h10v14l-5 5-5-5z" fill="%23f4f4f4" stroke="%23c4c4c4"/></svg>');
}

.marks {
  display: flex;
  justify-content: space-between;
}

.marks i {
  width: 1px;
  height: 5px;
  background-color: #cfcfcf;
}

.zoom output {
  width: 37px;
  margin-left: 11px;
}
```
